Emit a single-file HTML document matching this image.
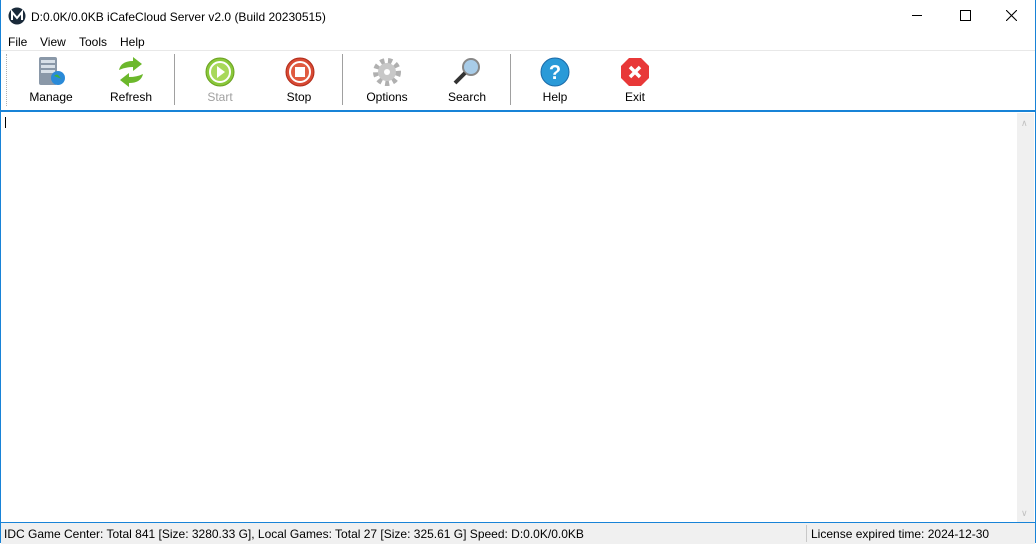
<html><head><style>
body{margin:0;width:1036px;height:543px;overflow:hidden;background:#fff;font-family:"Liberation Sans",sans-serif;font-size:12px;position:relative}
.a{position:absolute}
.lbl{position:absolute;top:90px;width:80px;text-align:center;font-size:12px;color:#000}
.ic{position:absolute;top:56px}
.sep{position:absolute;top:54px;width:1px;height:51px;background:#a0a0a0}
</style></head><body>
<div class="a" style="left:0;top:0;width:1036px;height:543px;box-sizing:border-box;border:1px solid #1883d7;border-top:none"></div>
<svg class="a" style="left:8px;top:7px" width="18" height="18"><circle cx="9" cy="9" r="8.5" fill="#1a2a3a"/><path d="M4 13V5l5 6 5-6v8" stroke="#fff" stroke-width="2" fill="none"/></svg>
<div class="a" style="left:31px;top:10px;font-size:12px">D:0.0K/0.0KB iCafeCloud Server v2.0 (Build 20230515)</div>
<div class="a" style="left:912px;top:15px;width:10px;height:1px;background:#000"></div>
<div class="a" style="left:960px;top:10px;width:9px;height:9px;border:1px solid #000"></div>
<svg class="a" style="left:1006px;top:10px" width="11" height="11"><path d="M0 0L11 11M11 0L0 11" stroke="#000" stroke-width="1.1"/></svg>
<div class="a" style="left:8px;top:35px">File</div>
<div class="a" style="left:40px;top:35px">View</div>
<div class="a" style="left:79px;top:35px">Tools</div>
<div class="a" style="left:120px;top:35px">Help</div>
<div class="a" style="left:1px;top:50px;width:1034px;height:1px;background:#e8e8e8"></div>
<div class="a" style="left:6px;top:54px;width:1px;height:52px;border-left:1px dotted #b0b0b0"></div>
<div class="sep" style="left:174px"></div><div class="sep" style="left:342px"></div><div class="sep" style="left:510px"></div>
<svg class="ic" style="left:36px" width="32" height="32"><rect x="3" y="1" width="18" height="28" rx="2" fill="#8a98a8"/><rect x="5" y="4" width="14" height="3" fill="#d8e0e8"/><rect x="5" y="9" width="14" height="3" fill="#d8e0e8"/><rect x="5" y="14" width="14" height="3" fill="#d8e0e8"/><circle cx="22" cy="22" r="7" fill="#2a8ad8"/><path d="M18 20q3-3 5 0t3 3" fill="#3cb040"/></svg>
<svg class="ic" style="left:115px" width="32" height="32"><path d="M4 14q2-9 14-9V1l9 7-9 7v-4q-8 0-14 3z" fill="#6cb82c"/><path d="M28 18q-2 9-14 9v4l-9-7 9-7v4q8 0 14-3z" fill="#6cb82c"/></svg>
<svg class="ic" style="left:204px" width="32" height="32"><circle cx="16" cy="16" r="14" fill="#8ac83a" stroke="#6aa020"/><circle cx="16" cy="16" r="10" fill="#a8d85a" stroke="#fff" stroke-width="2"/><path d="M13 10l8 6-8 6z" fill="#fff"/></svg>
<svg class="ic" style="left:284px" width="32" height="32"><circle cx="16" cy="16" r="14" fill="#d84a34" stroke="#b02a18"/><circle cx="16" cy="16" r="10" fill="#e05a40" stroke="#fff" stroke-width="2"/><rect x="11" y="11" width="10" height="10" fill="#fff"/></svg>
<svg class="ic" style="left:371px" width="32" height="32"><circle cx="16" cy="16" r="11" fill="none" stroke="#b0b0b0" stroke-width="6" stroke-dasharray="4 3.5"/><circle cx="16" cy="16" r="9" fill="#c8c8c8"/><circle cx="16" cy="16" r="3" fill="#fff"/></svg>
<svg class="ic" style="left:451px" width="32" height="32"><circle cx="20" cy="11" r="8" fill="#a8cce8" stroke="#888" stroke-width="2"/><path d="M14 17L4 27" stroke="#333" stroke-width="4"/></svg>
<svg class="ic" style="left:539px" width="32" height="32"><circle cx="16" cy="16" r="14" fill="#2a9ad8" stroke="#1a6aa8"/><text x="16" y="23" text-anchor="middle" font-size="20" font-weight="bold" fill="#fff" font-family="Liberation Sans">?</text></svg>
<svg class="ic" style="left:619px" width="32" height="32"><path d="M10 2h12l8 8v12l-8 8H10l-8-8V10z" fill="#e83838"/><path d="M11 11l10 10M21 11L11 21" stroke="#fff" stroke-width="3.5"/></svg>
<div class="lbl" style="left:11px">Manage</div><div class="lbl" style="left:91px">Refresh</div><div class="lbl" style="left:180px;color:#a0a0a0">Start</div><div class="lbl" style="left:259px">Stop</div><div class="lbl" style="left:347px">Options</div><div class="lbl" style="left:427px">Search</div><div class="lbl" style="left:515px">Help</div><div class="lbl" style="left:595px">Exit</div>
<div class="a" style="left:1px;top:110px;width:1034px;height:2px;background:#1883d7"></div>
<div class="a" style="left:1017px;top:113px;width:17px;height:409px;background:#f0f0f0"></div>
<div class="a" style="left:1021px;top:118px;color:#c0c0c0;font-size:9px">&#8743;</div>
<div class="a" style="left:1021px;top:508px;color:#c0c0c0;font-size:9px">&#8744;</div>
<div class="a" style="left:5px;top:117px;width:1px;height:11px;background:#000"></div>
<div class="a" style="left:1px;top:522px;width:1034px;height:21px;background:#f0f0f0;border-top:1px solid #1883d7"></div>
<div class="a" style="left:4px;top:527px">IDC Game Center: Total 841 [Size: 3280.33 G], Local Games: Total 27 [Size: 325.61 G] Speed: D:0.0K/0.0KB</div>
<div class="a" style="left:806px;top:525px;width:1px;height:17px;background:#c8c8c8"></div>
<div class="a" style="left:811px;top:527px">License expired time: 2024-12-30</div>
</body></html>
